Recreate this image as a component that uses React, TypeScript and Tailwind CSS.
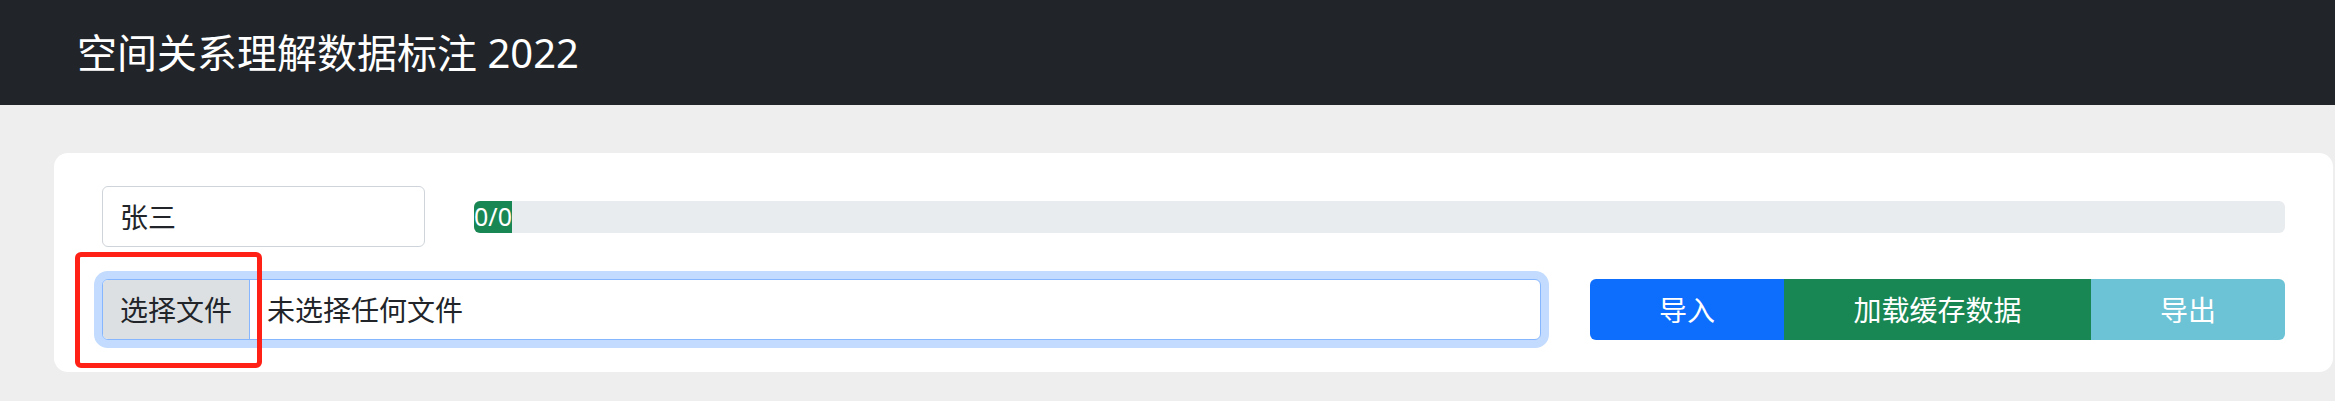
import React from "react";

const font = "font-['Noto_Sans','Noto_Sans_CJK_SC',sans-serif]";

function Header() {
  return (
    <div className="flex h-[105px] items-center bg-[#212529] pl-[77px]">
      <h1 className="text-[40px] leading-none font-normal text-white">
        空间关系理解数据标注 2022
      </h1>
    </div>
  );
}

function ProgressRow() {
  return (
    <div className="flex items-center gap-[49px]">
      <div className="flex h-[61px] w-[323px] items-center rounded-[6px] border border-[#ced4da] bg-white pl-[17px] text-[28px] text-[#212529]">
        张三
      </div>
      <div className="flex h-[32px] flex-1 overflow-hidden rounded-[6px] bg-[#e9ecef]">
        <div className="flex w-[38px] items-center justify-center bg-[#198754] text-[25px] leading-none whitespace-nowrap text-white">
          0/0
        </div>
      </div>
    </div>
  );
}

function FileInput() {
  return (
    <div className="relative w-[1439px]">
      {/* focus ring */}
      <div className="flex h-[61px] overflow-hidden rounded-[6px] border border-[#86b7fe] bg-white text-[28px] text-[#212529] shadow-[0_0_0_8px_#c2dbfe]">
        <div className="flex items-center border-r border-[#86b7fe] bg-[#dde0e3] px-[17px]">
          选择文件
        </div>
        <div className="flex items-center pl-[17px]">未选择任何文件</div>
      </div>
      {/* annotation box */}
      <div className="absolute top-[-27px] left-[-27px] h-[116px] w-[187px] rounded-[6px] border-[5px] border-[#ff2016]" />
    </div>
  );
}

function ActionButtons() {
  return (
    <div className="flex h-[61px] flex-1 overflow-hidden rounded-[6px] text-[28px] text-white">
      <button className="w-[194px] bg-[#0d6efd]">导入</button>
      <button className="flex-1 bg-[#198754]">加载缓存数据</button>
      <button className="w-[194px] bg-[#6cc3d5]">导出</button>
    </div>
  );
}

export default function App() {
  return (
    <div className={`${font} min-h-[401px] bg-[#eeeeee]`}>
      <Header />
      <div className="pt-[48px] pr-[2px] pl-[54px]">
        <div className="flex flex-col gap-[32px] rounded-[14px] bg-white px-[48px] pt-[33px] pb-[32px]">
          <ProgressRow />
          <div className="flex items-center gap-[49px]">
            <FileInput />
            <ActionButtons />
          </div>
        </div>
      </div>
    </div>
  );
}
